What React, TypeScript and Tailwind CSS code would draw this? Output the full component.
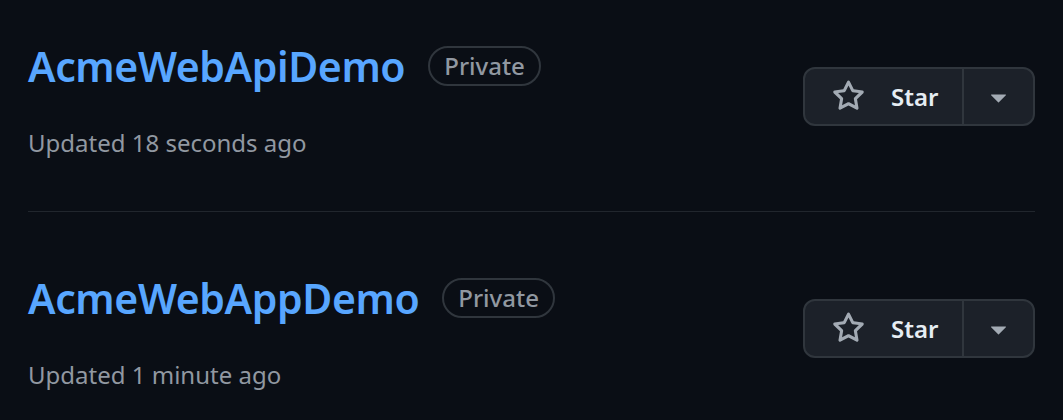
import React from 'react';

const repos = [
  { name: 'AcmeWebApiDemo', updated: 'Updated 18 seconds ago' },
  { name: 'AcmeWebAppDemo', updated: 'Updated 1 minute ago' },
];

function StarIcon() {
  return (
    <svg viewBox="0 0 16 16" className="w-[33px] h-[33px] fill-current text-[#a3abb4]">
      <path d="M8 .25a.75.75 0 0 1 .673.418l1.882 3.815 4.21.612a.75.75 0 0 1 .416 1.279l-3.046 2.97.719 4.192a.751.751 0 0 1-1.088.791L8 12.347l-3.766 1.98a.75.75 0 0 1-1.088-.79l.72-4.194L.818 6.374a.75.75 0 0 1 .416-1.28l4.21-.611L7.327.668A.75.75 0 0 1 8 .25Zm0 2.445L6.615 5.5a.75.75 0 0 1-.564.41l-3.097.45 2.24 2.184a.75.75 0 0 1 .216.664l-.528 3.084 2.769-1.456a.75.75 0 0 1 .698 0l2.77 1.456-.53-3.084a.75.75 0 0 1 .216-.664l2.24-2.183-3.096-.45a.75.75 0 0 1-.564-.41L8 2.694Z" />
    </svg>
  );
}

function CaretIcon() {
  return (
    <svg viewBox="0 0 16 16" className="w-[33px] h-[33px] fill-current text-[#a3abb4]">
      <path d="m4.427 7.427 3.396 3.396a.25.25 0 0 0 .354 0l3.396-3.396A.25.25 0 0 0 11.396 7H4.604a.25.25 0 0 0-.177.427Z" />
    </svg>
  );
}

export default function App() {
  return (
    <div className="h-[420px] w-full bg-[#0a0e15] px-[28px] font-['Noto_Sans',sans-serif] overflow-hidden">
      <div className="-mt-[20px]">
        {repos.map((repo, i) => (
          <div
            key={repo.name}
            className={`flex items-start justify-between pt-[60px] ${i === 0 ? 'h-[232px] border-b border-[#21262d]' : ''}`}
          >
            {/* Name, badge and update time */}
            <div className="flex flex-col">
              <div className="flex items-center gap-[23px]">
                <span className="text-[41px] leading-[52px] font-semibold text-[#58a6ff] tracking-[-0.4px]">
                  {repo.name}
                </span>
                <span className="rounded-full border-2 border-[#30363d] px-[14px] h-[40px] flex items-center text-[24px] font-medium text-[#9198a1]">
                  Private
                </span>
              </div>
              <p className="mt-[34px] text-[24px] leading-[34px] text-[#9198a1]">{repo.updated}</p>
            </div>

            {/* Star button group */}
            <div className="mt-[27px] flex h-[59px] rounded-[12px] border-2 border-[#30363d] bg-[#1c2129] overflow-hidden">
              <button className="flex w-[157px] items-center gap-[26px] pl-[27px] text-[24px] font-semibold text-[#e6edf3]">
                <StarIcon />
                <span>Star</span>
              </button>
              <button className="flex w-[71px] items-center justify-center border-l-2 border-[#30363d]">
                <CaretIcon />
              </button>
            </div>
          </div>
        ))}
      </div>
    </div>
  );
}
